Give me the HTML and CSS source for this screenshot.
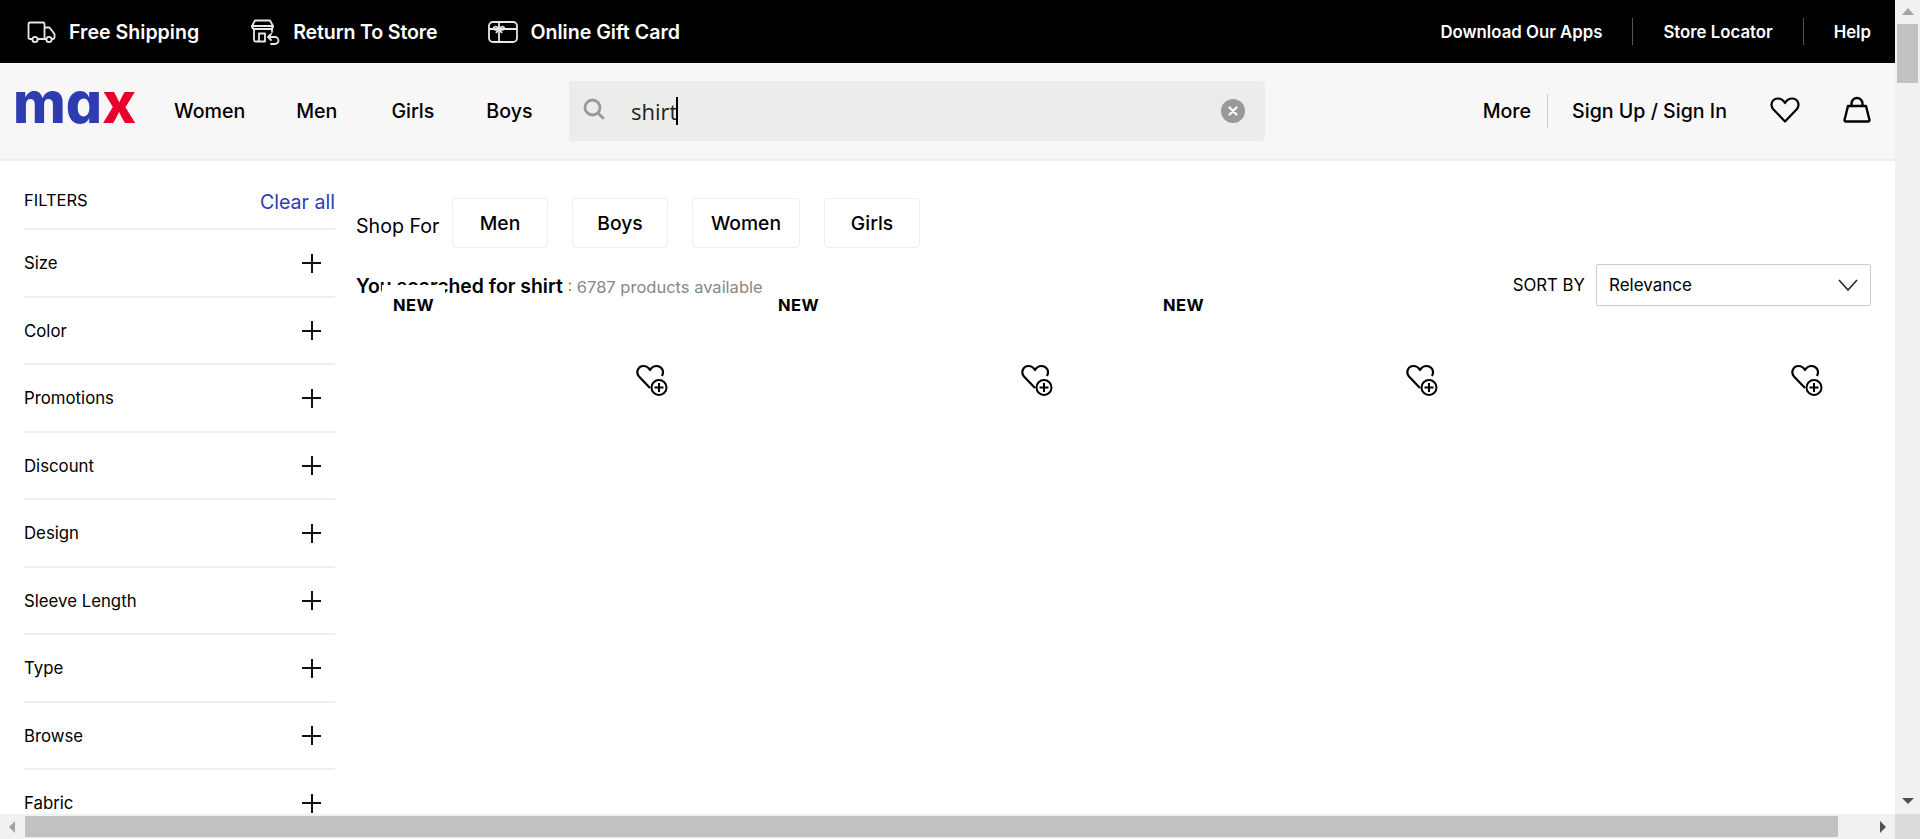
FILE: index.html
```html
<!DOCTYPE html>
<html lang="en">
<head>
    <meta charset="UTF-8">
    <meta name="viewport" content="width=device-width, initial-scale=1.0">
    <title>Max - shirt</title>
    <link rel="stylesheet" href="styles.css">
</head>
<body>
<div class="window">
    <div class="page">
        <div class="topbar">
            <div class="topbar-left">
                <a class="promo promo-ship">
                    <svg width="30" height="24" viewBox="0 0 30 24" fill="none" stroke="#e8e8e8" stroke-width="1.8" stroke-linejoin="round"><path d="M5 19H3a1.500 1.500 0 0 1-1.500-1.500V4A1.500 1.500 0 0 1 3 2.500h13A1.500 1.500 0 0 1 17.500 4v15H11"/><path d="M17.500 7.500h5l5 6.500v3.500A1.500 1.500 0 0 1 26 19h-1M19 19h-1.500"/><circle cx="8" cy="19.500" r="2.600"/><circle cx="22" cy="19.500" r="2.600"/></svg>
                    Free Shipping
                </a>
                <a class="promo promo-store">
                    <svg width="30" height="26" viewBox="0 0 30 26" fill="none" stroke="#e8e8e8" stroke-width="1.800" stroke-linejoin="round" stroke-linecap="round"><path d="M4 1.500h15L22 7H1z"/><path d="M1 7a3 3 0 0 0 3 3h15a3 3 0 0 0 3-3"/><path d="M3 10v11a1.500 1.500 0 0 0 1.500 1.500H14M21 10v3"/><path d="M8 22v-7.500h6V22"/><path d="M20 15l-3 3 3 3M17.500 18H24a3.500 3.500 0 0 1 0 7h-4"/></svg>
                    Return To Store
                </a>
                <a class="promo">
                    <svg width="30" height="24" viewBox="0 0 30 24" fill="none" stroke="#e8e8e8" stroke-width="1.800" stroke-linejoin="round"><rect x="1" y="2" width="28" height="20" rx="4"/><path d="M11 2v20M1 9h28"/><path d="M11 9c-3-4-6-2-5 0 .5 1 3 1 5 0zM11 9c3-4 6-2 5 0-.5 1-3 1-5 0z"/><path d="M11 9l-3 4M11 9l3 4"/></svg>
                    Online Gift Card
                </a>
            </div>
            <div class="topbar-right">
                <a>Download Our Apps</a>
                <a>Store Locator</a>
                <a>Help</a>
            </div>
        </div>

        <header class="header">
            <div class="logo">ma<span class="logo-x">x</span></div>
            <nav class="nav">
                <a>Women</a>
                <a>Men</a>
                <a>Girls</a>
                <a>Boys</a>
            </nav>
            <div class="search">
                <svg class="search-icon" width="22" height="22" viewBox="0 0 22 22" fill="none" stroke="#999" stroke-width="2.800" stroke-linecap="round"><circle cx="9.500" cy="9.500" r="7.500"/><path d="M15 15l5 5"/></svg>
                <span class="search-text">shirt</span>
                <span class="caret"></span>
                <span class="search-clear">
                    <svg width="10" height="10" viewBox="0 0 10 10" stroke="#fff" stroke-width="2.200" stroke-linecap="round"><path d="M1.500 1.500l7 7M8.500 1.500l-7 7"/></svg>
                </span>
            </div>
            <div class="account">
                <a class="more">More</a>
                <a class="signin">Sign Up / Sign In</a>
                <svg class="wish" width="30" height="26" viewBox="0 0 30 26" fill="none" stroke="#000" stroke-width="2.200" stroke-linejoin="round"><path d="M15 24.500L3.500 12.500C-.5 8 2 1.500 8 1.500c3.500 0 5.500 2 7 4.500 1.500-2.500 3.500-4.500 7-4.500 6 0 8.500 6.500 4.500 11z"/></svg>
                <svg class="bag" width="28" height="27" viewBox="0 0 28 27" fill="none" stroke="#000" stroke-width="2.400" stroke-linejoin="round"><path d="M5 10h18l3.500 14a1.300 1.300 0 0 1-1.300 1.500H2.800A1.300 1.300 0 0 1 1.500 24z"/><path d="M8.500 10V7.500a5.500 5.500 0 0 1 11 0V10"/></svg>
            </div>
        </header>

        <div class="content">
            <aside class="filters">
                <div class="filters-head">
                    <span class="filters-title">FILTERS</span>
                    <a class="clear-all">Clear all</a>
                </div>
                <div class="filter"><span>Size</span><span class="plus"></span></div>
                <div class="filter"><span>Color</span><span class="plus"></span></div>
                <div class="filter"><span>Promotions</span><span class="plus"></span></div>
                <div class="filter"><span>Discount</span><span class="plus"></span></div>
                <div class="filter"><span>Design</span><span class="plus"></span></div>
                <div class="filter"><span>Sleeve Length</span><span class="plus"></span></div>
                <div class="filter"><span>Type</span><span class="plus"></span></div>
                <div class="filter"><span>Browse</span><span class="plus"></span></div>
                <div class="filter"><span>Fabric</span><span class="plus"></span></div>
            </aside>

            <main class="results">
                <div class="shop-for">
                    <span class="shop-label">Shop For</span>
                    <a class="chip chip-men">Men</a>
                    <a class="chip chip-boys">Boys</a>
                    <a class="chip chip-women">Women</a>
                    <a class="chip chip-girls">Girls</a>
                </div>
                <div class="results-head">
                    <div class="summary"><b>You searched for shirt</b><span class="count"> : 6787 products available</span></div>
                    <div class="sort">
                        <span class="sort-label">SORT BY</span>
                        <div class="select">
                            Relevance
                            <svg width="20" height="12" viewBox="0 0 20 12" fill="none" stroke="#222" stroke-width="1.500"><path d="M1 1l9 10 9-10"/></svg>
                        </div>
                    </div>
                </div>
                <div class="products">
                    <div class="product"><span class="badge">NEW</span>
                        <svg class="add-wish" width="32" height="33"><use href="#wish-add"/></svg></div>
                    <div class="product"><span class="badge">NEW</span>
                        <svg class="add-wish" width="32" height="33"><use href="#wish-add"/></svg></div>
                    <div class="product"><span class="badge">NEW</span>
                        <svg class="add-wish" width="32" height="33"><use href="#wish-add"/></svg></div>
                    <div class="product">
                        <svg class="add-wish" width="32" height="33"><use href="#wish-add"/></svg></div>
                </div>
            </main>
        </div>
    </div>

    <div class="vscroll">
        <span class="arrow arrow-up"></span>
        <span class="vthumb"></span>
        <span class="arrow arrow-down"></span>
    </div>
    <div class="hscroll">
        <span class="arrow arrow-left"></span>
        <span class="hthumb"></span>
        <span class="arrow arrow-right"></span>
    </div>
    <div class="corner"></div>
</div>

<svg class="defs" width="0" height="0">
    <symbol id="wish-add" viewBox="0 0 32 33">
        <path d="M14 24L3 12.500C-.5 8.500 2 2 7.500 2c3 0 5 1.500 6.500 4 1.500-2.500 3.500-4 6.500-4 5.500 0 8 5.500 5.500 10" fill="none" stroke="#000" stroke-width="2.200" stroke-linejoin="round"/>
        <circle cx="23" cy="23.500" r="7.500" fill="#fff" stroke="#000" stroke-width="2"/>
        <path d="M23 19v9M18.500 23.500h9" stroke="#000" stroke-width="2"/>
    </symbol>
</svg>
</body>
</html>
```

FILE: styles.css
```css
* {
    box-sizing: border-box;
}

html, body {
    margin: 0;
    height: 100%;
    overflow: hidden;
}

body {
    font-family: 'Inter', 'Open Sans', sans-serif;
    color: #000;
    background-color: #fff;
}

a {
    color: inherit;
    text-decoration: none;
}

.defs {
    display: block;
}

.window {
    display: grid;
    grid-template-columns: 1fr 25px;
    grid-template-rows: 1fr 25px;
    width: 1920px;
    height: 839px;
}

.page {
    overflow: hidden;
}

/* top black strip */
.topbar {
    display: flex;
    justify-content: space-between;
    align-items: center;
    height: 63px;
    padding: 0 24px 0 27px;
    background-color: #000;
    color: #fff;
}

.topbar-left {
    display: flex;
    align-items: center;
}

.promo {
    display: flex;
    align-items: center;
    gap: 12px;
    font-size: 19.6px;
    font-weight: 600;
}

.promo-ship {
    margin-right: 52px;
}

.promo-store {
    margin-right: 51px;
    letter-spacing: -0.16px;
}

.topbar-right {
    display: flex;
    align-items: center;
    font-size: 16.8px;
    font-weight: 600;
}

.topbar-right a {
    display: flex;
    align-items: center;
    height: 27px;
    padding: 0 30px;
    border-right: 1px solid #555;
}

.topbar-right a:last-child {
    padding-right: 0;
    border-right: none;
}

/* header */
.header {
    display: flex;
    align-items: center;
    height: 98px;
    padding: 0 24px 0 13px;
    background-color: #f7f7f7;
    border-bottom: 2px solid #eee;
}

.logo {
    width: 161px;
    font-size: 57px;
    font-weight: 800;
    font-feature-settings: 'cv11';
    line-height: 1;
    color: #2f3bb0;
    margin-top: -17px;
}

.logo-x {
    color: #e8002d;
}

.nav {
    display: flex;
    width: 395px;
    font-size: 19.6px;
    font-weight: 500;
}

.nav a:nth-child(1) { margin-right: 51px; }
.nav a:nth-child(2) { margin-right: 54px; }
.nav a:nth-child(3) { margin-right: 52px; }

.search {
    display: flex;
    align-items: center;
    width: 696px;
    height: 60px;
    padding: 0 20px 0 14px;
    background-color: #ececea;
    border-radius: 4px;
}

.search-icon {
    margin-top: -5px;
}

.search-text {
    margin-left: 26px;
    font-family: 'Open Sans', sans-serif;
    font-size: 22px;
    color: #222;
}

.caret {
    width: 2px;
    height: 28px;
    margin-left: -1px;
    background-color: #000;
}

.search-clear {
    display: flex;
    align-items: center;
    justify-content: center;
    width: 24px;
    height: 24px;
    margin-left: auto;
    border-radius: 50%;
    background-color: #999;
}

.account {
    display: flex;
    align-items: center;
    margin-left: auto;
    font-size: 19.6px;
    font-weight: 500;
}

.more {
    display: flex;
    align-items: center;
    height: 34px;
    padding-right: 16px;
    border-right: 1px solid #ccc;
}

.signin {
    margin-left: 24px;
    margin-right: 43px;
}

.wish {
    margin-right: 43px;
    margin-bottom: 3px;
}

.bag {
    margin-bottom: 4px;
}

/* body */
.content {
    display: flex;
    padding: 0 0 0 24px;
}

.filters {
    flex: none;
    width: 311px;
    font-size: 16.8px;
}

.filters-head {
    display: flex;
    justify-content: space-between;
    align-items: center;
    height: 69px;
    padding-top: 14px;
    border-bottom: 2px solid #eee;
}

.filters-title {
    font-size: 16.5px;
    margin-top: -4px;
}

.clear-all {
    font-size: 19.6px;
    color: #2f3bb0;
}

.filter {
    display: flex;
    justify-content: space-between;
    align-items: center;
    height: 67.5px;
    padding-right: 14px;
    padding-top: 1px;
    border-bottom: 2px solid #eee;
}

.plus {
    position: relative;
    width: 19px;
    height: 19px;
}

.plus::before,
.plus::after {
    content: "";
    position: absolute;
    background-color: #111;
}

.plus::before {
    left: 0;
    right: 0;
    top: 8.500px;
    height: 2px;
}

.plus::after {
    top: 0;
    bottom: 0;
    left: 8.500px;
    width: 2px;
}

.results {
    flex: none;
    width: 1515px;
    margin-left: 21px;
}

.shop-for {
    display: flex;
    align-items: center;
    padding-top: 37px;
    font-size: 19.3px;
    font-weight: 500;
}

.shop-label {
    width: 96px;
    margin-top: 5px;
    font-size: 19.6px;
    font-weight: 400;
}

.chip {
    display: flex;
    align-items: center;
    justify-content: center;
    height: 50px;
    margin-right: 24px;
    padding-bottom: 1px;
    background-color: #fff;
    border: 1px solid #eee;
    border-radius: 4px;
}

.chip-men, .chip-boys, .chip-girls {
    width: 96px;
}

.chip-women {
    width: 108px;
}

.results-head {
    display: flex;
    justify-content: space-between;
    align-items: center;
    margin-top: 16px;
}

.summary {
    padding-top: 2px;
    font-size: 19.4px;
}

.summary b {
    font-weight: 600;
}

.count {
    font-size: 16.5px;
    color: #888;
}

.sort {
    display: flex;
    align-items: center;
    gap: 11px;
}

.sort-label {
    font-size: 16.8px;
}

.select {
    display: flex;
    justify-content: space-between;
    align-items: center;
    width: 275px;
    height: 42px;
    padding: 0 12px 0 12px;
    font-size: 17px;
    border: 1px solid #ccc;
    border-radius: 2px;
}

/* product cards have no pictures yet, only the overlays */
.products {
    display: grid;
    grid-template-columns: repeat(4, 385px);
    margin-top: -21px;
}

.product {
    position: relative;
    height: 300px;
}

.badge {
    position: absolute;
    left: 26px;
    top: 0;
    padding: 10px 11px;
    font-size: 16.5px;
    font-weight: 700;
    letter-spacing: 0.5px;
    background-color: #fff;
}

.add-wish {
    position: absolute;
    left: 280px;
    top: 79px;
}

/* scrollbars */
.vscroll {
    display: flex;
    flex-direction: column;
    align-items: center;
    background-color: #f1f1f1;
}

.hscroll {
    display: flex;
    align-items: center;
    background-color: #f1f1f1;
}

.corner {
    background-color: #dcdcdc;
}

.vthumb {
    width: 21px;
    height: 59px;
    background-color: #c1c1c1;
}

.hthumb {
    width: 1813px;
    height: 21px;
    background-color: #c1c1c1;
}

.arrow {
    flex: none;
    width: 0;
    height: 0;
    border-style: solid;
    border-color: transparent;
}

.arrow-up {
    margin: 8px 0 9px;
    border-width: 0 6px 7px;
    border-bottom-color: #a3a3a3;
}

.arrow-down {
    margin-top: auto;
    margin-bottom: 10px;
    border-width: 6px 6px 0;
    border-top-color: #505050;
}

.arrow-left {
    margin: 0 10px 0 9px;
    border-width: 6px 6px 6px 0;
    border-right-color: #a3a3a3;
}

.arrow-right {
    margin-left: 42px;
    border-width: 6px 0 6px 6px;
    border-left-color: #505050;
}
```
